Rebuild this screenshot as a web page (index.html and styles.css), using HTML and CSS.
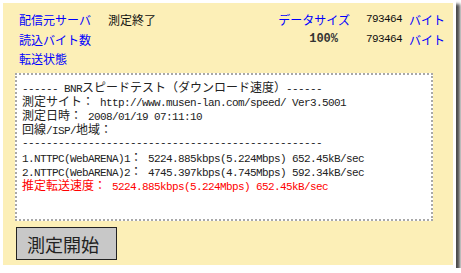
FILE: index.html
```html
<!DOCTYPE html>
<html lang="ja">
  <head>
    <meta charset="UTF-8" />
    <meta name="viewport" content="width=device-width, initial-scale=1.0" />
    <title>BNRスピードテスト</title>
    <link rel="stylesheet" href="styles.css">
  </head>
  <body>
    <div class="frame">
      <div class="panel">
        <div class="status">
          <span class="label">配信元サーバ</span>
          <span class="state">測定終了</span>
          <span class="label right">データサイズ</span>
          <span class="num">793464</span>
          <span class="label unit">バイト</span>

          <span class="label">読込バイト数</span>
          <span></span>
          <span class="pct">100%</span>
          <span class="num">793464</span>
          <span class="label unit">バイト</span>

          <span class="label">転送状態</span>
        </div>

        <div class="result">
          <div class="ln">------ BNR<span class="zen">スピードテスト（ダウンロード速度）</span>------</div>
          <div class="ln"><span class="zen">測定サイト：</span> http://www.musen-lan.com/speed/ Ver3.5001</div>
          <div class="ln"><span class="zen">測定日時：</span> 2008/01/19 07:11:10</div>
          <div class="ln"><span class="zen">回線</span>/ISP/<span class="zen">地域：</span></div>
          <div class="ln">--------------------------------------------------</div>
          <div class="ln">1.NTTPC(WebARENA)1<span class="zen">：</span> 5224.885kbps(5.224Mbps) 652.45kB/sec</div>
          <div class="ln">2.NTTPC(WebARENA)2<span class="zen">：</span> 4745.397kbps(4.745Mbps) 592.34kB/sec</div>
          <div class="ln total"><span class="zen">推定転送速度：</span> 5224.885kbps(5.224Mbps) 652.45kB/sec</div>
        </div>

        <button class="start-btn" type="button">測定開始</button>
      </div>
    </div>
  </body>
</html>
```

FILE: styles.css
```css
body {
  margin: 0;
  background: #fff;
  font-family: "Noto Sans CJK JP", sans-serif;
}

.frame {
  width: 456px;
  height: 268px;
  padding: 3px;
  box-sizing: border-box;
  background: #fff;
  box-shadow: 4px 4px 3px rgba(0, 0, 0, 0.7);
}

.panel {
  height: 100%;
  padding: 7px 0 0 12px;
  box-sizing: border-box;
  background: #fcefb7;
}

.status {
  display: grid;
  grid-template-columns: 89px 1fr auto 52px 51px;
  grid-auto-rows: 19.5px;
  align-items: center;
  padding-left: 4px;
  font-size: 12px;
  line-height: 19.5px;
}

.label {
  color: #0000ff;
}

.right {
  text-align: right;
}

.unit {
  padding-left: 7px;
}

.state {
  color: #111;
}

.num {
  text-align: right;
  font-family: "Liberation Mono", monospace;
  font-size: 11px;
  letter-spacing: -0.6px;
  color: #111;
}

.pct {
  text-align: right;
  padding-right: 12px;
  font-family: "Liberation Mono", monospace;
  font-weight: bold;
  font-size: 12px;
  color: #333;
}

.result {
  width: 418px;
  height: 148px;
  margin-top: 4.5px;
  padding: 5px 0 0 5px;
  box-sizing: border-box;
  background: #fff;
  border: 2px dotted #a8a8a8;
  font-family: "Liberation Mono", monospace;
  font-size: 11px;
  letter-spacing: -0.6px;
  color: #222;
}

.ln {
  height: 14px;
  line-height: 14px;
  white-space: pre;
}

.zen {
  font-family: "Noto Sans CJK JP", sans-serif;
  font-size: 12px;
  letter-spacing: 0;
}

.total {
  color: #f00;
}

.start-btn {
  display: block;
  width: 101px;
  height: 33px;
  margin: 6px 0 0 1px;
  padding: 0 0 0 10px;
  text-align: left;
  background: #c8c8c8;
  border: 1px solid #222;
  border-radius: 0;
  font-family: "Noto Sans CJK JP", sans-serif;
  font-size: 18px;
  color: #222;
}
```
